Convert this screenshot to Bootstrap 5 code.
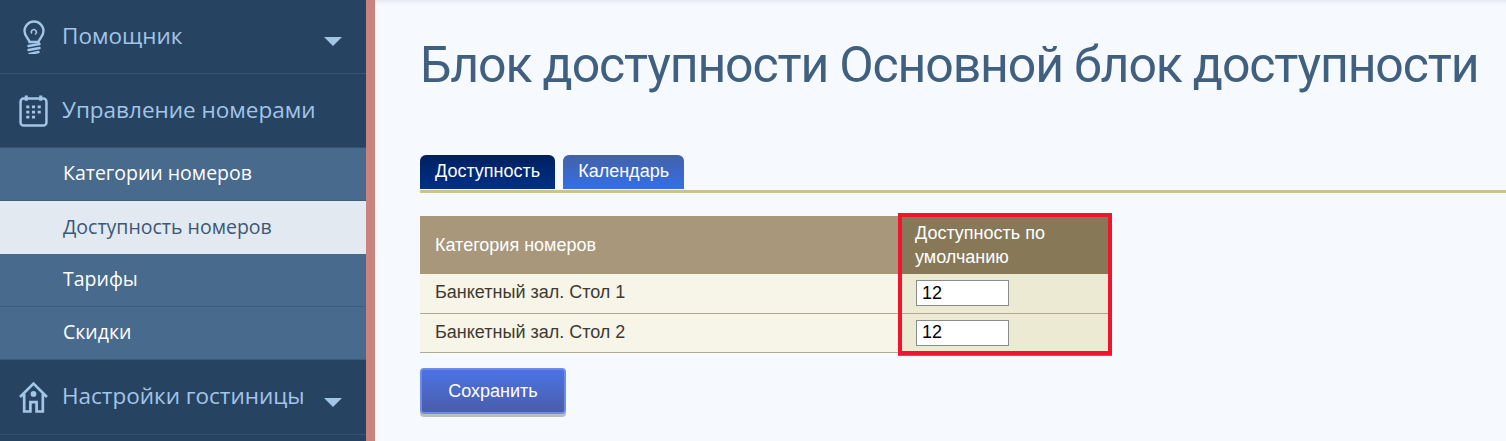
<!DOCTYPE html>
<html lang="ru">
<head>
  <meta charset="UTF-8" />
  <meta name="viewport" content="width=device-width, initial-scale=1.0" />
  <title>Блок доступности</title>
  <link href="https://cdn.jsdelivr.net/npm/bootstrap@5.3.0/dist/css/bootstrap.min.css" rel="stylesheet">
  <style>
    html, body { height: 441px; overflow: hidden; }
    body { background: #f6faff; font-family: "Liberation Sans", Arial, sans-serif; }
    .page-wrap { height: 441px; }
    .side-panel { width: 375px; flex: none; background: #274362; border-right: 9px solid #c9837d; font-family: "Open Sans", sans-serif; }
    .side-head { height: 74px; padding-left: 19px; color: #a3c5e6; font-size: 22.500px; border-bottom: 1px solid #35526f; }
    .side-head span:first-of-type { margin-top: -2px; }
    .side-head .ico { width: 29px; height: 34px; flex: none; margin-right: 14px; }
    .side-head .caret-mark { margin-left: auto; margin-right: 24px; margin-top: 10px; width: 0; height: 0; border-left: 9px solid transparent; border-right: 9px solid transparent; border-top: 9px solid #a3c5e6; }
    .side-head.last-head { height: 75px; }
    .side-sub { height: 53px; padding: 0 0 2px 63px; font-size: 19.500px; color: #fff; background: #486a8c; border-bottom: 1px solid #3d5d7e; }
    .side-sub.is-active { background: #e2e9f0; color: #3c5875; border-bottom: 0; }
    .main-area { padding: 0 0 0 45px; min-width: 0; flex-grow: 1; box-shadow: inset 0 6px 6px -6px #d5d8dc; }
    .page-title { font-family: Roboto, sans-serif; font-size: 50px; font-weight: 400; color: #41607f; margin: 31px 0 0 0; line-height: 68px; white-space: nowrap; letter-spacing: -1.15px; }
    .tab-row { margin-top: 56px; border-bottom: 3px solid #cbc291; gap: 8px; padding-bottom: 1px; }
    .tab-item { height: 34px; padding: 0 15px; font-size: 18px; line-height: 32px; color: #fff; border-radius: 6px 6px 0 0; }
    .tab-item.is-on { background: linear-gradient(#00205f, #003088); }
    .tab-item.is-off { background: linear-gradient(#4461a8, #336fe6); }
    .room-wrap { width: 688px; margin-top: 23px; }
    .room-table { width: 688px; margin: 0; table-layout: fixed; font-size: 18px; }
    .room-table th { background: #a8977a; color: #fff; font-weight: 400; height: 58px; padding: 0 15px; line-height: 24px; vertical-align: middle; border: 0; }
    .room-table th.col-hl { background: #877858; }
    .room-table td { background: #f7f4e8; color: #3e3a32; height: 39px; padding: 0 15px 2px; vertical-align: middle; border: 0; border-bottom: 1px solid #aea895; }
    .room-table tbody tr:last-child td { padding-bottom: 0; }
    .room-table td.col-hl { background: #edead4; padding: 0 15px 0 16px; }
    .room-table input { width: 93px; height: 26px; display: block; border: 1px solid #8b8b8b; background: #fff; padding: 0 5px; font-size: 18px; color: #000; }
    .red-frame { position: absolute; left: 478px; top: -3px; width: 214px; height: 142px; border: 4px solid #f0142d; box-shadow: 0 1px 0 #777; pointer-events: none; }
    .save-btn { margin-top: 15px; width: 146px; height: 46px; font-size: 18px; color: #fff; border: 2px solid #6e8be6; border-radius: 4px; background: linear-gradient(#4b72e6, #4a5ea8); box-shadow: 0 3px 0 #bdbdbd; padding: 1px 0 0; }
  </style>
</head>
<body>
  <div class="page-wrap d-flex">
    <!-- Sidebar -->
    <div class="side-panel">
      <div class="side-head d-flex align-items-center">
        <svg class="ico" viewBox="0 0 28 34" fill="none" stroke="#a3c5e6" stroke-width="2.400" stroke-linecap="round">
          <path d="M10 22c0-3-5-5-5-11a9.500 9.500 0 0 1 19 0c0 6-5 8-5 11z"/>
          <path d="M12 13a2.500 2.500 0 1 1 4 1" stroke-width="1.500"/>
          <path d="M9 26l11-2M9 30l11-2M10 34l9-2"/>
        </svg>
        <span>Помощник</span>
        <span class="caret-mark"></span>
      </div>
      <div class="side-head d-flex align-items-center">
        <svg class="ico" viewBox="0 0 28 32" fill="none" stroke="#a3c5e6" stroke-width="2.400">
          <rect x="1.500" y="4" width="25" height="26" rx="3"/>
          <path d="M7 1v5M21 1v5" stroke-width="3"/>
          <path d="M7 12h3M12.500 12h3M18 12h3M7 17h3M12.500 17h3M18 17h3M7 22h3M12.500 22h3" stroke-width="2.600"/>
        </svg>
        <span>Управление номерами</span>
      </div>
      <div class="side-sub d-flex align-items-center">Категории номеров</div>
      <div class="side-sub is-active d-flex align-items-center">Доступность номеров</div>
      <div class="side-sub d-flex align-items-center">Тарифы</div>
      <div class="side-sub d-flex align-items-center">Скидки</div>
      <div class="side-head last-head d-flex align-items-center">
        <svg class="ico" viewBox="0 0 28 30" fill="none" stroke="#a3c5e6" stroke-width="2.600">
          <path d="M1 15L14 2l13 13M5 12v17h6v-9h6v9h6V12"/>
          <circle cx="14" cy="12" r="2.800" fill="#a3c5e6" stroke="none"/>
        </svg>
        <span>Настройки гостиницы</span>
        <span class="caret-mark"></span>
      </div>
    </div>

    <!-- Content -->
    <div class="main-area">
      <h1 class="page-title">Блок доступности Основной блок доступности</h1>
      <div class="tab-row d-flex">
        <div class="tab-item is-on">Доступность</div>
        <div class="tab-item is-off">Календарь</div>
      </div>
      <div class="room-wrap position-relative">
        <table class="table room-table">
          <colgroup><col style="width: 480px"><col></colgroup>
          <thead>
            <tr><th>Категория номеров</th><th class="col-hl">Доступность по умолчанию</th></tr>
          </thead>
          <tbody>
            <tr><td>Банкетный зал. Стол 1</td><td class="col-hl"><input type="text" value="12"></td></tr>
            <tr><td>Банкетный зал. Стол 2</td><td class="col-hl"><input type="text" value="12"></td></tr>
          </tbody>
        </table>
        <div class="red-frame"></div>
      </div>
      <button type="button" class="btn save-btn">Сохранить</button>
    </div>
  </div>
  <script src="https://cdn.jsdelivr.net/npm/bootstrap@5.3.0/dist/js/bootstrap.bundle.min.js"></script>
</body>
</html>
